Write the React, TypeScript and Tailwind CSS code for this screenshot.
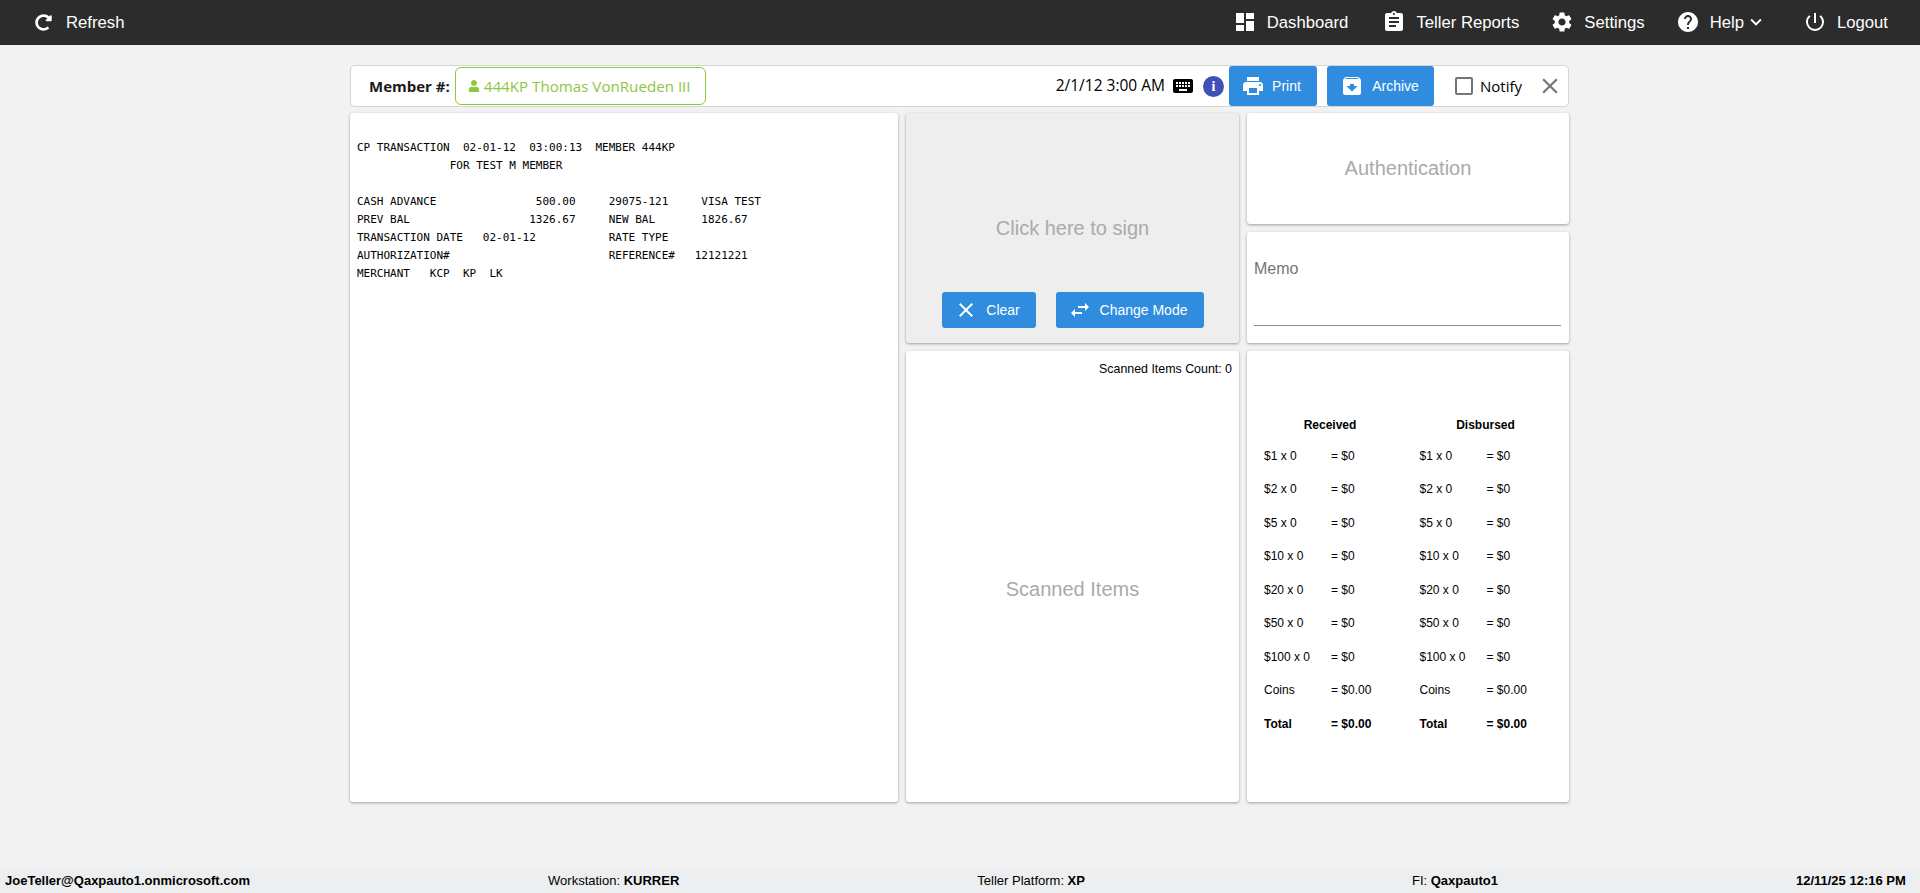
import { FaRedoAlt, FaUser } from "react-icons/fa";
import {
  MdArchive,
  MdAssignment,
  MdCheckBoxOutlineBlank,
  MdClose,
  MdDashboard,
  MdHelp,
  MdKeyboard,
  MdKeyboardArrowDown,
  MdPowerSettingsNew,
  MdPrint,
  MdSettings,
  MdSwapHoriz,
} from "react-icons/md";

const receipt = `CP TRANSACTION  02-01-12  03:00:13  MEMBER 444KP
              FOR TEST M MEMBER

CASH ADVANCE               500.00     29075-121     VISA TEST
PREV BAL                  1326.67     NEW BAL       1826.67
TRANSACTION DATE   02-01-12           RATE TYPE
AUTHORIZATION#                        REFERENCE#   12121221
MERCHANT   KCP  KP  LK`;

const denominations = ["$1", "$2", "$5", "$10", "$20", "$50", "$100"];

function NavItem({ icon, label }: { icon: React.ReactNode; label: string }) {
  return (
    <div className="flex items-center gap-[10px] text-[16.7px] text-white">
      {icon}
      <span>{label}</span>
    </div>
  );
}

function CashColumn({ title }: { title: string }) {
  return (
    <div className="w-[155.5px] shrink-0">
      <div className="mb-[7px] w-[132px] text-center text-[12px] leading-[14px] font-bold">{title}</div>
      {denominations.map((d) => (
        <div key={d} className="flex h-[33.5px] items-center text-[12px]">
          <span className="w-[67px]">{d} x 0</span>
          <span>= $0</span>
        </div>
      ))}
      <div className="flex h-[33.5px] items-center text-[12px]">
        <span className="w-[67px]">Coins</span>
        <span>= $0.00</span>
      </div>
      <div className="flex h-[33.5px] items-center text-[12px] font-bold">
        <span className="w-[67px]">Total</span>
        <span>= $0.00</span>
      </div>
    </div>
  );
}

export default function App() {
  return (
    <div className="flex h-[893px] flex-col overflow-hidden bg-[#f2f2f2] font-['Liberation_Sans',sans-serif] text-black">
      <header className="flex h-[45px] shrink-0 items-center justify-between bg-[#2c2c2c] pr-[32px] pl-[35px]">
        <div className="flex items-center gap-[14px] text-[16.7px] text-white">
          <FaRedoAlt size={17} />
          <span>Refresh</span>
        </div>
        <div className="flex items-center gap-[31px]">
          <div className="mr-[3px]">
            <NavItem icon={<MdDashboard size={24} />} label="Dashboard" />
          </div>
          <NavItem icon={<MdAssignment size={24} />} label="Teller Reports" />
          <NavItem icon={<MdSettings size={24} />} label="Settings" />
          <div className="flex items-center gap-[10px] text-[16.7px] text-white">
            <MdHelp size={24} />
            <span className="-mr-[9px]">Help</span>
            <MdKeyboardArrowDown size={22} />
          </div>
          <div className="pl-[5px]">
            <NavItem icon={<MdPowerSettingsNew size={24} />} label="Logout" />
          </div>
        </div>
      </header>

      <main className="mt-[20px] ml-[350px] flex w-[1219px] flex-col gap-[6px]">
        <div className="flex h-[42px] items-center rounded-[5px] border border-[#d4d4d4] bg-white pr-[5px] pl-[18px]">
          <span className="font-['Open_Sans',sans-serif] text-[15px] font-bold text-[#1a1a1a]">Member #:</span>
          <div className="ml-[5px] flex h-[38px] items-center gap-[4px] rounded-[6px] border border-[#8dc63f] pr-[14px] pl-[12px] font-['Open_Sans',sans-serif] text-[15.15px] text-[#8dc63f]">
            <FaUser size={12} />
            <span>444KP Thomas VonRueden III</span>
          </div>
          <div className="ml-auto flex items-center">
            <span className="font-['Open_Sans',sans-serif] text-[15.5px]">2/1/12 3:00 AM</span>
            <MdKeyboard size={24} className="ml-[6px]" />
            <span className="ml-[8px] flex h-[21px] w-[21px] items-center justify-center rounded-full bg-[#3f51b5] font-['Liberation_Serif',serif] text-[14px] font-bold text-white">
              i
            </span>
            <button className="ml-[5px] flex h-[40px] w-[88px] items-center justify-center gap-[7px] rounded-[3px] bg-[#2f8cde] pr-[4px] text-[14px] text-white">
              <MdPrint size={24} />
              Print
            </button>
            <button className="ml-[10px] flex h-[40px] w-[107px] items-center justify-center gap-[8px] rounded-[3px] bg-[#2f8cde] pr-[2px] text-[14px] text-white">
              <MdArchive size={24} />
              Archive
            </button>
            <MdCheckBoxOutlineBlank size={24} className="ml-[18px] text-[#757575]" />
            <span className="ml-[4px] font-['Open_Sans',sans-serif] text-[15px]">Notify</span>
            <MdClose size={26} className="ml-[15px] text-[#757575]" />
          </div>
        </div>

        <div className="grid h-[689px] grid-cols-[548px_333px_322px] grid-rows-[111px_111px_451px] gap-[8px]">
          <section className="row-span-3 rounded-[3px] bg-white px-[7px] pt-[26px] shadow-[0_1px_3px_rgba(0,0,0,0.35)]">
            <pre className="font-['DejaVu_Sans_Mono',monospace] text-[11px] leading-[18px]">{receipt}</pre>
          </section>

          <section className="row-span-2 flex flex-col items-center rounded-[3px] bg-[#eeeeee] shadow-[0_1px_3px_rgba(0,0,0,0.35)]">
            <span className="mt-[100px] text-[20px] text-[#aaaaaa]">Click here to sign</span>
            <div className="mt-[49px] flex gap-[20px]">
              <button className="flex h-[36px] w-[94px] items-center justify-center gap-[8px] rounded-[3px] bg-[#2f8cde] pr-[3px] text-[14px] text-white">
                <MdClose size={24} />
                Clear
              </button>
              <button className="flex h-[36px] w-[148px] items-center justify-center gap-[8px] rounded-[3px] bg-[#2f8cde] pr-[4px] text-[14px] text-white">
                <MdSwapHoriz size={24} />
                Change Mode
              </button>
            </div>
          </section>

          <section className="flex items-center justify-center rounded-[3px] bg-white pb-[1px] text-[20px] text-[#aaaaaa] shadow-[0_1px_3px_rgba(0,0,0,0.35)]">
            Authentication
          </section>

          <section className="flex flex-col rounded-[3px] bg-white pr-[8px] pl-[7px] shadow-[0_1px_3px_rgba(0,0,0,0.35)]">
            <span className="mt-[28px] text-[16px] leading-[18px] text-[#757575]">Memo</span>
            <div className="mt-[47px] border-b border-[#8a8a8a]"></div>
          </section>

          <section className="relative flex items-center justify-center rounded-[3px] bg-white pt-[24px] text-[20px] text-[#aaaaaa] shadow-[0_1px_3px_rgba(0,0,0,0.35)]">
            <span className="absolute top-[9px] right-[7px] text-[12.4px] text-black">Scanned Items Count: 0</span>
            Scanned Items
          </section>

          <section className="flex rounded-[3px] bg-white pt-[67px] pl-[17px] shadow-[0_1px_3px_rgba(0,0,0,0.35)]">
            <CashColumn title="Received" />
            <CashColumn title="Disbursed" />
          </section>
        </div>
      </main>

      <footer className="mt-auto flex h-[25px] shrink-0 items-center gap-[298px] bg-[#eceef0] pl-[5px] text-[13px]">
        <b>JoeTeller@Qaxpauto1.onmicrosoft.com</b>
        <span>Workstation: <b>KURRER</b></span>
        <span>Teller Platform: <b>XP</b></span>
        <span className="ml-[29px]">FI: <b>Qaxpauto1</b></span>
        <b>12/11/25 12:16 PM</b>
      </footer>
    </div>
  );
}
